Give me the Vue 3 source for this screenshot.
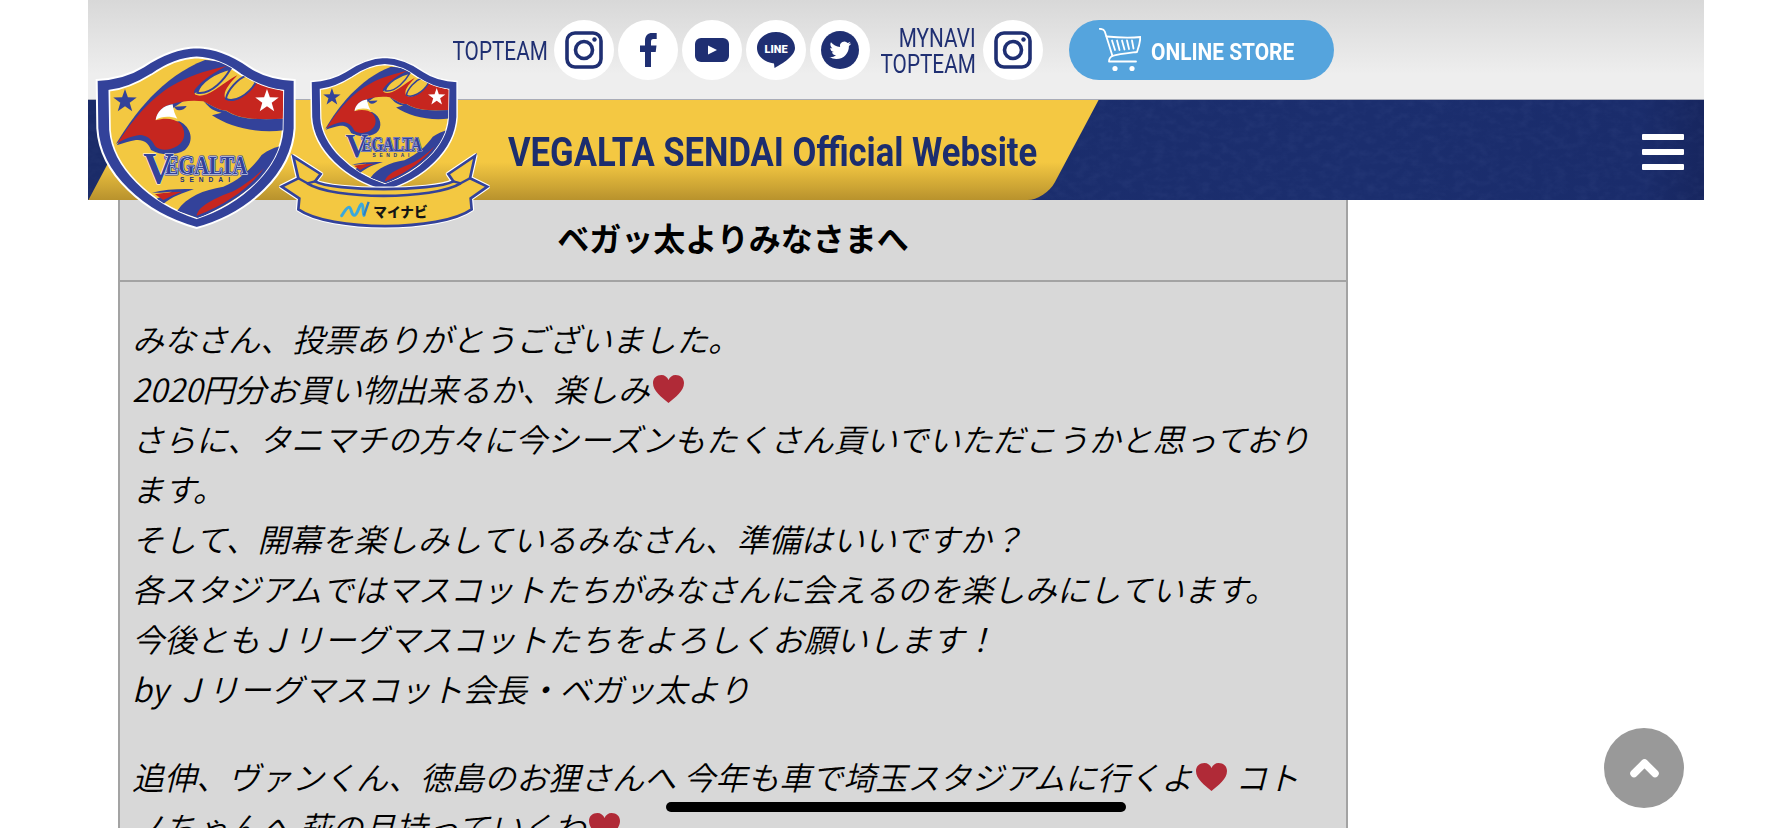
<script setup>
const star = (cx, cy, r) => {
  const pts = []
  for (let i = 0; i < 10; i++) {
    const rad = i % 2 ? r * 0.4 : r
    const a = -Math.PI / 2 + (i * Math.PI) / 5
    pts.push(`${(cx + rad * Math.cos(a)).toFixed(1)},${(cy + rad * Math.sin(a)).toFixed(1)}`)
  }
  return pts.join(' ')
}
const bird = 'M23.953 4.57a10 10 0 01-2.825.775 4.958 4.958 0 002.163-2.723c-.951.555-2.005.959-3.127 1.184a4.92 4.92 0 00-8.384 4.482C7.69 8.095 4.067 6.13 1.64 3.162a4.822 4.822 0 00-.666 2.475c0 1.71.87 3.213 2.188 4.096a4.904 4.904 0 01-2.228-.616v.06a4.923 4.923 0 003.946 4.827 4.996 4.996 0 01-2.212.085 4.936 4.936 0 004.604 3.417 9.867 9.867 0 01-6.102 2.105c-.39 0-.779-.023-1.17-.067a13.995 13.995 0 007.557 2.209c9.053 0 13.998-7.496 13.998-13.985 0-.21 0-.42-.015-.63A9.935 9.935 0 0024 4.59z'
const outer = 'M320 22C255 24 205 50 160 80C120 105 70 118 20 120L22 265C30 400 160 520 320 564C480 520 606 400 614 265L614 120C565 118 515 105 478 80C435 50 385 24 320 22Z'
const inner = 'M320 52C270 54 225 75 185 103C145 128 100 148 58 152L60 270C68 380 180 490 320 535C460 490 570 380 578 270L580 152C535 148 490 128 452 103C415 75 370 54 320 52Z'
const heartPath = 'M16 29C9 23 0.500 17 0.500 9C0.500 4 4 1 9 1C12 1 15 3 16 6C17 3 20 1 23 1C28 1 31.500 4 31.500 9C31.500 17 23 23 16 29Z'
const ribbon = 'M40 320L122 372L105 394C160 425 460 425 520 394L505 372L585 318L570 385L622 410L572 445L575 478C480 545 150 545 55 478L58 445L5 410L55 385Z'
</script>

<template>
  <div class="page">
    <header class="site-header">
      <div class="top-bar">
        <div class="label team-label"><span>TOPTEAM</span></div>
        <a class="sns">
          <svg viewBox="0 0 60 60" width="60" height="60"><rect x="13" y="13" width="34" height="34" rx="8" fill="none" stroke="#1f2f72" stroke-width="3.600"/><circle cx="30" cy="30" r="8.500" fill="none" stroke="#1f2f72" stroke-width="3.600"/><circle cx="40.500" cy="19.500" r="2.200" fill="#1f2f72"/></svg>
        </a>
        <a class="sns">
          <svg viewBox="0 0 60 60" width="60" height="60"><path d="M27 47V32H22V25.500H27V21C27 15.500 30 13 34 13H38.700V19H35.500C33.500 19 33 20 33 22V25.500H38.500L37.700 32H33V47Z" fill="#1f2f72"/></svg>
        </a>
        <a class="sns">
          <svg viewBox="0 0 60 60" width="60" height="60"><rect x="13" y="18" width="34" height="24" rx="6" fill="#1f2f72"/><path d="M26 25.500L35 30L26 34.500Z" fill="#fff"/></svg>
        </a>
        <a class="sns">
          <svg viewBox="0 0 60 60" width="60" height="60"><path d="M30 12C19.500 12 11 19 11 28C11 36 18 42 28 43.500L28.500 48C33 45.500 49 37 49 28C49 19 40.500 12 30 12Z" fill="#1f2f72"/><text x="18.500" y="32.500" font-family="Roboto, sans-serif" font-weight="900" font-size="11" textLength="23" lengthAdjust="spacingAndGlyphs" fill="#fff">LINE</text></svg>
        </a>
        <a class="sns">
          <svg viewBox="0 0 60 60" width="60" height="60"><circle cx="30" cy="30" r="19" fill="#1f2f72"/><path :d="bird" transform="translate(19.500,19.500) scale(0.9)" fill="#fff"/></svg>
        </a>
        <div class="label navi-label"><span>MYNAVI</span><span>TOPTEAM</span></div>
        <a class="sns">
          <svg viewBox="0 0 60 60" width="60" height="60"><rect x="13" y="13" width="34" height="34" rx="8" fill="none" stroke="#1f2f72" stroke-width="3.600"/><circle cx="30" cy="30" r="8.500" fill="none" stroke="#1f2f72" stroke-width="3.600"/><circle cx="40.500" cy="19.500" r="2.200" fill="#1f2f72"/></svg>
        </a>
        <a class="store">
          <svg class="cart" viewBox="0 0 42 44" width="42" height="44" fill="none" stroke="#fff" stroke-width="1.800" stroke-linecap="round" stroke-linejoin="round">
            <path d="M0.500 0.800C3 0.800 5 1.500 5.800 3.500L13.500 28C11 29 10 31 10 33.500H37"/>
            <path d="M7.500 8.500C18 9.500 31 10 41.500 9C41 14 39.500 20 38 24C30 25 20 26 13 28"/>
            <path d="M13 12.500L16 22M18 12.500L20.500 22M23 12.500L25.500 21.500M28 12.500L30 21M33 12.500L34.500 20.500"/>
            <circle cx="16" cy="40.500" r="2.600" fill="#fff" stroke="none"/>
            <circle cx="33" cy="40.500" r="2.600" fill="#fff" stroke="none"/>
          </svg>
          <span class="store-box"><span>ONLINE STORE</span></span>
        </a>
      </div>
      <div class="main-bar">
        <svg class="grain" width="1616" height="100" aria-hidden="true">
          <filter id="grainNoise"><feTurbulence type="fractalNoise" baseFrequency="0.09 0.14" numOctaves="3" seed="4"/><feColorMatrix values="0 0 0 0 0.35  0 0 0 0 0.45  0 0 0 0 0.8  0 0 0 1.4 -0.55"/></filter>
          <rect width="1616" height="100" filter="url(#grainNoise)" opacity="0.07"/>
        </svg>
        <div class="yellow"></div>
        <h1 class="site-title"><span>VEGALTA SENDAI Official Website</span></h1>
        <button class="burger" aria-label="menu"><i></i><i></i><i></i></button>
      </div>
    </header>

    <svg class="logos" viewBox="0 0 400 200" width="400" height="200">
      <defs>
        <clipPath id="innerClip"><path :d="inner"/></clipPath>
        <g id="shield">
          <path :d="outer" fill="#33429a" stroke="#fff" stroke-width="6"/>
          <path :d="inner" fill="#f3c841" stroke="#fff" stroke-width="5"/>
          <g clip-path="url(#innerClip)">
            <path d="M78 312C130 225 215 110 345 60C375 62 405 68 428 80L300 170L150 270Z" fill="#33429a"/>
            <path d="M268 244C305 262 314 305 285 330C255 348 210 346 183 330C176 308 160 298 138 300C118 303 100 310 80 316L120 260Z" fill="#33429a"/>
            <path d="M82 310C130 235 190 165 262 128C310 102 365 88 412 77C380 92 335 120 315 148C305 165 325 172 350 163C385 148 415 118 442 106C422 128 396 155 406 175C420 192 470 175 497 128L590 156L590 236C520 240 450 240 410 212C385 212 362 195 340 184C310 180 270 183 245 193C225 196 203 210 197 241C225 232 255 236 270 250C288 270 288 302 262 318C240 332 210 334 195 318C186 298 170 286 150 285C125 288 100 298 82 310Z" fill="#c6261f"/>
            <path d="M322 158C330 125 380 95 422 86C405 115 365 165 322 158Z" fill="#f3c841" stroke="#33429a" stroke-width="6"/>
            <path d="M408 176C412 150 445 115 470 106C480 110 490 118 497 128C475 165 430 190 408 176Z" fill="#f3c841" stroke="#33429a" stroke-width="6"/>
            <path d="M366 226C420 262 500 282 590 270L590 236C510 240 450 240 408 212C385 212 362 195 340 184C355 196 360 212 395 218Z" fill="#33429a"/>
            <path d="M262 512C290 470 340 450 400 440C450 420 490 380 515 345C535 330 555 322 580 316C565 370 480 470 325 535Z" fill="#33429a"/>
            <path d="M320 527C325 505 345 490 400 465C450 450 490 415 522 385C490 430 420 490 320 527Z" fill="#c6261f"/>
            <path d="M186 458C225 448 275 446 312 448C280 458 245 470 218 494L200 476C215 470 225 465 245 455C225 456 205 460 186 458Z" fill="#33429a"/>
            <path d="M195 463C220 458 250 455 277 455C255 462 235 472 220 480Z" fill="#c6261f"/>
          </g>
          <path d="M197 240C200 215 220 197 248 193C250 210 255 225 262 236C240 228 215 228 197 240Z" fill="#fff"/>
          <path d="M252 200L290 198C285 210 265 214 258 208Z" fill="#33429a"/>
          <polygon :points="star(105, 184, 37)" fill="#33429a"/>
          <polygon :points="star(531, 184, 37)" fill="#fff"/>
          <text x="225" y="403" font-family="Liberation Serif, serif" font-weight="700" font-size="76" textLength="247" lengthAdjust="spacingAndGlyphs" fill="#33429a" stroke="#33429a" stroke-width="9" stroke-linejoin="round">EGALTA</text>
          <text x="225" y="403" font-family="Liberation Serif, serif" font-weight="700" font-size="76" textLength="247" lengthAdjust="spacingAndGlyphs" fill="#33429a" stroke="#fff" stroke-width="3" paint-order="stroke">EGALTA</text>
          <text x="160" y="429" font-family="Liberation Serif, serif" font-weight="700" font-size="135" textLength="92" lengthAdjust="spacingAndGlyphs" fill="#33429a" stroke="#fff" stroke-width="3" paint-order="stroke">V</text>
          <text x="270" y="427" font-family="Liberation Sans, sans-serif" font-weight="700" font-size="20" textLength="150" fill="#22307e">SENDAI</text>
        </g>
      </defs>
      <use href="#shield" transform="scale(0.3333)"/>
      <g transform="translate(190,10) scale(0.3333)">
        <use href="#shield" transform="translate(93,22) scale(0.738) translate(-20,-22)"/>
        <path :d="ribbon" fill="#f3c841" stroke="#fff" stroke-width="15" stroke-linejoin="round"/>
        <path :d="ribbon" fill="#f3c841" stroke="#33429a" stroke-width="8"/>
        <path d="M82 400C160 450 460 450 542 400" fill="none" stroke="#33429a" stroke-width="8"/>
        <path d="M55 385L82 400L105 394M570 385L542 400L520 394" fill="none" stroke="#33429a" stroke-width="7"/>
        <path d="M185 497C195 482 200 472 207 472C215 472 213 496 223 496C233 496 238 462 245 462C251 462 248 490 252 496" fill="none" stroke="#3ba8dc" stroke-width="9" stroke-linecap="round" stroke-linejoin="round"/>
        <path d="M252 496L266 456" fill="none" stroke="#2f80c4" stroke-width="7"/>
        <text x="280" y="500" font-family="Noto Sans CJK JP, sans-serif" font-weight="900" font-size="41" fill="#151515">マイナビ</text>
      </g>
    </svg>

    <main class="article">
      <h2 class="article-title">ベガッ太よりみなさまへ</h2>
      <div class="article-body">
        <p>みなさん、投票ありがとうございました。<br>2020円分お買い物出来るか、楽しみ<svg class="heart" viewBox="0 0 32 32"><path :d="heartPath"/></svg><br>さらに、タニマチの方々に今シーズンもたくさん貢いでいただこうかと思っております。<br>そして、開幕を楽しみしているみなさん、準備はいいですか？<br>各スタジアムではマスコットたちがみなさんに会えるのを楽しみにしています。<br>今後ともＪリーグマスコットたちをよろしくお願いします！<br>by Ｊリーグマスコット会長・ベガッ太より</p>
        <p>追伸、ヴァンくん、徳島のお狸さんへ 今年も車で埼玉スタジアムに行くよ<svg class="heart" viewBox="0 0 32 32"><path :d="heartPath"/></svg> コトノちゃんへ 萩の月持っていくわ<svg class="heart" viewBox="0 0 32 32"><path :d="heartPath"/></svg></p>
      </div>
    </main>

    <a class="to-top" aria-label="top">
      <svg viewBox="0 0 80 80" width="80" height="80"><path d="M30 45.500L40.500 35L51 45.500" fill="none" stroke="#fff" stroke-width="7.500" stroke-linecap="round" stroke-linejoin="round"/></svg>
    </a>
    <div class="home-indicator"></div>
  </div>
</template>

<style>
html, body { margin: 0; background: #fff; overflow: hidden; }
</style>

<style scoped>
.page {
  position: relative;
  width: 1792px;
  height: 828px;
  overflow: hidden;
  background: #fff;
}
.site-header {
  position: relative;
  z-index: 2;
  margin: 0 88px;
}
.top-bar {
  display: flex;
  align-items: flex-start;
  height: 79px;
  padding: 20px 0 0 365px;
  background: linear-gradient(#d8d8d8, #eeeeee 75%);
  border-bottom: 1px solid #a9acb8;
  gap: 4px;
}
.label {
  display: flex;
  flex-direction: column;
  align-items: flex-end;
  height: 60px;
  padding-top: 4px;
  box-sizing: border-box;
  justify-content: center;
  font-family: Roboto, sans-serif;
  font-size: 25px;
  line-height: 26px;
  color: #1f2f72;
  white-space: nowrap;
}
.label span {
  display: block;
  transform: scaleX(0.83);
  transform-origin: right center;
}
.team-label { width: 95px; margin-right: 2px; }
.navi-label { width: 100px; margin: 0 3px 0 2px; }
.sns {
  display: block;
  flex: none;
  width: 60px;
  height: 60px;
  border-radius: 50%;
  background: #fff;
}
.sns svg { display: block; }
.store {
  display: flex;
  align-items: center;
  width: 265px;
  height: 60px;
  margin-left: 22px;
  padding-left: 30px;
  box-sizing: border-box;
  border-radius: 30px;
  background: #55a4dd;
}
.cart { flex: none; margin-top: -1px; }
.store-box {
  display: block;
  margin: 4px 0 0 10px;
  width: 143px;
  font-family: Roboto, sans-serif;
  font-weight: 700;
  font-size: 24px;
  color: #fff;
  white-space: nowrap;
}
.store-box span {
  display: inline-block;
  transform: scaleX(0.87);
  transform-origin: left center;
}
.main-bar {
  position: relative;
  display: flex;
  align-items: center;
  justify-content: flex-end;
  height: 100px;
  overflow: hidden;
  background: linear-gradient(90deg, #1a2b68, #1b2e6e 80%, #1a2c6b 96%, #17265f);
}
.grain {
  position: absolute;
  left: 0;
  top: 0;
  display: block;
}
.yellow {
  position: absolute;
  top: 0;
  left: 27px;
  width: 957px;
  height: 100px;
  transform: skewX(-28deg);
  border-bottom-right-radius: 18px;
  background: linear-gradient(#f4c842 62%, #b8922d);
}
.site-title {
  position: absolute;
  left: 420px;
  top: 2px;
  margin: 0;
  height: 100px;
  display: flex;
  align-items: center;
  font-family: Roboto, sans-serif;
  font-weight: 700;
  font-size: 40px;
  color: #1c2d6e;
  white-space: nowrap;
}
.site-title span {
  display: block;
  transform: scaleX(0.865);
  transform-origin: left center;
}
.burger {
  position: relative;
  display: flex;
  flex-direction: column;
  gap: 9px;
  width: 42px;
  margin: 4px 20px 0 0;
  padding: 0;
  border: 0;
  background: none;
}
.burger i {
  display: block;
  height: 6px;
  border-radius: 1px;
  background: #fff;
}
.logos {
  position: absolute;
  z-index: 3;
  left: 90px;
  top: 40px;
}
.article {
  position: relative;
  z-index: 1;
  width: 1226px;
  margin-left: 118px;
  border-left: 2px solid #a3a3a3;
  border-right: 2px solid #a3a3a3;
  background: #d8d8d8;
  color: #000;
  font-family: "Noto Sans CJK JP", sans-serif;
  font-size: 32px;
}
.article-title {
  margin: 0;
  height: 80px;
  line-height: 74px;
  border-bottom: 2px solid #a3a3a3;
  text-align: center;
  font-size: 32px;
  font-weight: 700;
}
.article-body {
  padding: 31px 26px 40px 12px;
  font-style: italic;
  font-weight: 350;
  line-height: 50px;
}
.article-body p { margin: 0 0 38px; }
.heart {
  display: inline-block;
  width: 33px;
  height: 32px;
  margin-left: 2px;
  vertical-align: -4px;
  fill: #b02a37;
}
.to-top {
  position: absolute;
  z-index: 4;
  left: 1604px;
  top: 728px;
  width: 80px;
  height: 80px;
  border-radius: 50%;
  background: #999;
}
.to-top svg { display: block; }
.home-indicator {
  position: absolute;
  z-index: 5;
  left: 666px;
  top: 802px;
  width: 460px;
  height: 10px;
  border-radius: 5px;
  background: #000;
}
</style>
